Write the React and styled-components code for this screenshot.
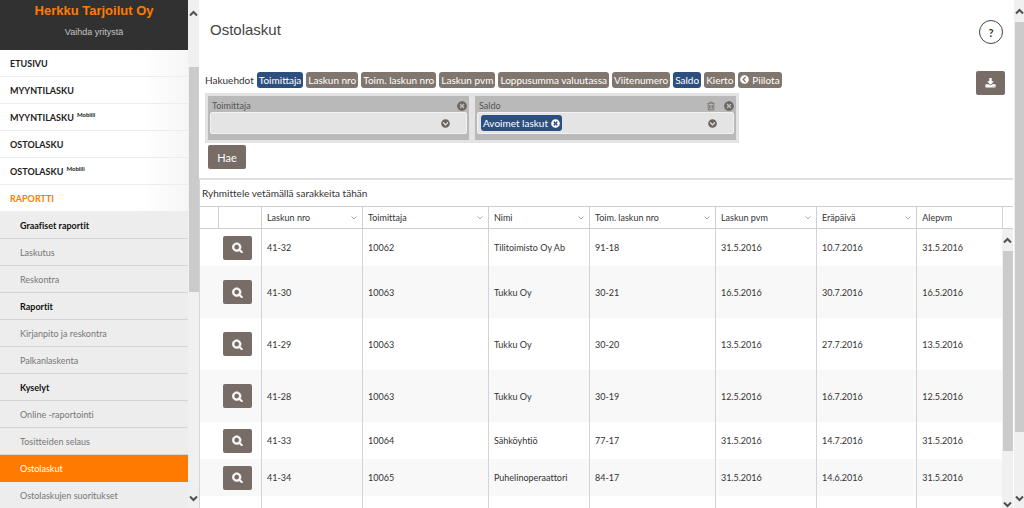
import React, { useState } from 'react';
import styled, { createGlobalStyle } from 'styled-components';
import {
  FaChevronCircleDown,
  FaChevronCircleLeft,
  FaTimesCircle,
} from 'react-icons/fa';

const GlobalStyle = createGlobalStyle`
  * {
    box-sizing: border-box;
  }

  body {
    margin: 0;
    background: #fff;
    color: #333;
    font-family: Lato, 'Open Sans', sans-serif;
    font-size: 9px;
    font-variant-ligatures: none;
    overflow: hidden;
  }

  button,
  input {
    font-family: inherit;
  }
`;

const Page = styled.div`
  display: flex;
  height: 100vh;
`;

/* scrollbars */

const Track = styled.div`
  flex: none;
  display: flex;
  flex-direction: column;
  align-items: center;
  width: ${(props) => props.$width || 11}px;
  background: #f0f0f0;
  color: #505050;
`;

const TrackEnd = styled.div`
  flex: none;
  display: flex;
  align-items: ${(props) => props.$align || 'center'};
  height: ${(props) => props.$height}px;
`;

const Thumb = styled.div`
  flex: ${(props) => props.$grow} 1 0;
  align-self: stretch;
  margin-left: 1px;
  background: #cbcbcb;
`;

const TrackRest = styled.div`
  flex: ${(props) => props.$grow} 1 0;
`;

/* sidebar */

const Sidebar = styled.aside`
  flex: none;
  width: 188px;
  overflow: hidden;
  background: #ededed;
`;

const Company = styled.div`
  display: flex;
  flex-direction: column;
  align-items: center;
  height: 50px;
  padding-top: 3px;
  background: #313131;
  font-family: 'Liberation Sans', Arial, sans-serif;
`;

const CompanyName = styled.strong`
  color: #ff7b00;
  font-size: 13px;
  line-height: 16px;
`;

const CompanySwitch = styled.a`
  margin-top: 5px;
  color: #c4c4c4;
  font-size: 9px;
  line-height: 16px;
  text-decoration: none;
`;

const MenuList = styled.ul`
  margin: 0;
  padding: 0;
  list-style: none;
`;

const MenuLink = styled.a`
  display: flex;
  align-items: center;
  height: 27px;
  padding-left: 10px;
  border-bottom: 1px solid #ededed;
  background: linear-gradient(to right, #fff 75%, #f6f6f6);
  color: ${(props) => (props.$open ? '#ff7b00' : '#222')};
  font-size: 9px;
  font-weight: 700;
  text-decoration: none;
`;

const Sup = styled.sup`
  align-self: flex-start;
  margin: 7px 0 0 3px;
  font-size: 6px;
  line-height: 8px;
`;

const SubLink = styled.a`
  display: flex;
  align-items: center;
  height: 27px;
  padding-left: 20px;
  border-bottom: 1px solid ${(props) => (props.$active ? '#ff7b00' : '#d4d4d4')};
  background: ${(props) => (props.$active ? '#ff7b00' : '#ededed')};
  color: ${(props) => (props.$active ? '#fff' : '#777')};
  font-size: 9px;
  text-decoration: none;
`;

const SubTitle = styled(SubLink).attrs({ as: 'div' })`
  color: #111;
  font-weight: 700;
`;

/* main area */

const Main = styled.main`
  flex: 1;
  min-width: 0;
  display: flex;
  flex-direction: column;
`;

const TitleBar = styled.header`
  display: flex;
  justify-content: space-between;
  align-items: flex-start;
  height: 62px;
  padding: 20px 11px 0;
`;

const Title = styled.h1`
  margin: 0;
  color: #444;
  font-family: 'Liberation Sans', Arial, sans-serif;
  font-size: 15px;
  font-weight: 400;
  line-height: 20px;
`;

const HelpButton = styled.button`
  width: 24px;
  height: 24px;
  padding: 0;
  border: 1px solid #444;
  border-radius: 50%;
  background: #fff;
  color: #333;
  font-size: 11px;
  font-weight: 700;
`;

const Filters = styled.section`
  display: flex;
  justify-content: space-between;
  align-items: flex-start;
  height: 116px;
  padding: 9px 9px 0 6px;
`;

const ChipRow = styled.div`
  display: flex;
  align-items: center;
  gap: 3px;
  height: 17px;
`;

const ChipLabel = styled.span`
  font-size: 10px;
`;

const Chip = styled.button`
  display: flex;
  align-items: center;
  gap: 3px;
  height: 16px;
  padding: 0 2px;
  border: 0;
  border-radius: 3px;
  background: ${(props) => (props.$on ? '#2d4f80' : '#80766e')};
  color: #fff;
  font-size: 10px;
  white-space: nowrap;
`;

const FilterPanel = styled.div`
  display: flex;
  gap: 6px;
  width: 534px;
  margin-top: 5px;
  padding: 3px;
  background: #e3e3e3;
`;

const FilterBox = styled.div`
  flex: 1;
  padding: 3px 2px 6px;
  background: #b9b9b9;
`;

const FilterHead = styled.div`
  display: flex;
  align-items: center;
  gap: 8px;
  height: 13px;
  padding-left: 2px;
  color: #555;

  label {
    flex: 1;
  }
`;

const IconButton = styled.button`
  display: flex;
  padding: 0;
  border: 0;
  background: none;
  color: #6b655f;
  font-size: 9px;
`;

const Combo = styled.div`
  display: flex;
  align-items: center;
  height: 22px;
  padding: 0 16px 0 3px;
  border: 1px solid #f2f2f2;
  border-radius: 2px;
  background: #e4e4e4;
`;

const ComboInput = styled.input`
  flex: 1;
  min-width: 0;
  height: 18px;
  border: 0;
  outline: 0;
  background: transparent;
  font-size: 10px;
`;

const SolidButton = styled.button`
  display: flex;
  align-items: center;
  justify-content: center;
  width: ${(props) => props.$width || 29}px;
  height: 24px;
  padding: 0;
  border: 0;
  border-radius: 2px;
  background: #776d66;
  color: #fff;
  font-size: 11px;
`;

const SearchRow = styled.div`
  padding: 2px 3px;
`;

/* grid */

const Grid = styled.section`
  flex: 1;
  min-height: 0;
  display: flex;
  flex-direction: column;
  margin-right: 1px;
  border-top: 2px solid #e0e0e0;
  border-left: 1px solid #d4d4d4;
`;

const GroupHint = styled.div`
  flex: none;
  height: 26px;
  padding-left: 2px;
  font-size: 10px;
  line-height: 26px;
`;

const HeadWrap = styled.div`
  flex: none;
  display: flex;
  border-top: 1px solid #cfcfcf;
  border-bottom: 1px solid #cfcfcf;
`;

const HeadEnd = styled.div`
  flex: none;
  width: 11px;
  border-left: 1px solid #d4d4d4;
`;

const BodyWrap = styled.div`
  flex: 1;
  min-height: 0;
  display: flex;
  overflow: hidden;
`;

const Scroller = styled.div`
  flex: 1;
  min-width: 0;
  overflow: hidden;
`;

const Table = styled.table`
  width: 100%;
  border-collapse: separate;
  border-spacing: 0;
  table-layout: fixed;
`;

const HeadCell = styled.th`
  height: 21px;
  padding: 0 5px;
  border-left: ${(props) => (props.$first ? '0' : '1px solid #cfcfcf')};
  font-weight: 400;
  text-align: left;
`;

const HeadInner = styled.span`
  display: flex;
  justify-content: space-between;
  align-items: center;
`;

const Row = styled.tr`
  height: ${(props) => props.$height}px;

  &:nth-child(even) {
    background: #f8f8f8;
  }
`;

const Cell = styled.td`
  padding: 0 5px;
  border-left: ${(props) => (props.$plain ? '0' : '1px solid #d4d4d4')};
`;

const PATHS = {
  search:
    'M1216 832q0-185-131.5-316.5t-316.5-131.5-316.5 131.5-131.5 316.5 131.5 316.5 316.5 131.5 316.5-131.5 131.5-316.5zm512 832q0 52-38 90t-90 38q-54 0-90-38l-343-342q-179 124-399 124-143 0-273.5-55.5t-225-150-150-225-55.5-273.5 55.5-273.5 150-225 225-150 273.5-55.5 273.5 55.5 225 150 150 225 55.5 273.5q0 220-124 399l343 343q37 37 37 90z',
  download:
    'M1344 1344q0-26-19-45t-45-19-45 19-19 45 19 45 45 19 45-19 19-45zm256 0q0-26-19-45t-45-19-45 19-19 45 19 45 45 19 45-19 19-45zm128-224v320q0 40-28 68t-68 28h-1472q-40 0-68-28t-28-68v-320q0-40 28-68t68-28h465l135 136q58 56 136 56t136-56l136-136h464q40 0 68 28t28 68zm-325-569q17 41-14 70l-448 448q-18 19-45 19t-45-19l-448-448q-31-29-14-70 17-39 59-39h256v-448q0-26 19-45t45-19h256q26 0 45 19t19 45v448h256q42 0 59 39z',
  trash:
    'M704 736v576q0 14-9 23t-23 9h-64q-14 0-23-9t-9-23v-576q0-14 9-23t23-9h64q14 0 23 9t9 23zm256 0v576q0 14-9 23t-23 9h-64q-14 0-23-9t-9-23v-576q0-14 9-23t23-9h64q14 0 23 9t9 23zm256 0v576q0 14-9 23t-23 9h-64q-14 0-23-9t-9-23v-576q0-14 9-23t23-9h64q14 0 23 9t9 23zm128 724v-948h-896v948q0 22 7 40.5t14.5 27 10.5 8.5h832q3 0 10.5-8.5t14.5-27 7-40.5zm-672-1076h448l-48-117q-7-9-17-11h-317q-10 2-17 11zm928 32v64q0 14-9 23t-23 9h-96v948q0 83-47 143.5t-113 60.5h-832q-66 0-113-58.5t-47-141.5v-952h-96q-14 0-23-9t-9-23v-64q0-14 9-23t23-9h309l70-167q15-37 54-63t79-26h320q40 0 79 26t54 63l70 167h309q14 0 23 9t9 23z',
};

function Icon({ name, size, weight = 0 }) {
  return (
    <svg
      width={size}
      height={size}
      viewBox="0 0 1792 1792"
      fill="currentColor"
      stroke="currentColor"
      strokeWidth={weight}
    >
      <path d={PATHS[name]} />
    </svg>
  );
}

function Arrow({ up }) {
  return (
    <svg width="9" height="7" viewBox="0 0 9 7" fill="none" stroke="currentColor" strokeWidth="2">
      <path d={up ? 'M1 5.5 4.5 2 8 5.5' : 'M1 1.5 4.5 5 8 1.5'} />
    </svg>
  );
}

function Caret() {
  return (
    <svg width="6" height="4" viewBox="0 0 6 4" fill="none" stroke="#aaa">
      <path d="M.5.5 3 3 5.5.5" />
    </svg>
  );
}

const menu = [
  { text: 'ETUSIVU' },
  { text: 'MYYNTILASKU' },
  { text: 'MYYNTILASKU', mobile: true },
  { text: 'OSTOLASKU' },
  { text: 'OSTOLASKU', mobile: true },
  { text: 'RAPORTTI', open: true },
];

const subMenu = [
  { text: 'Graafiset raportit', title: true },
  { text: 'Laskutus' },
  { text: 'Reskontra' },
  { text: 'Raportit', title: true },
  { text: 'Kirjanpito ja reskontra' },
  { text: 'Palkanlaskenta' },
  { text: 'Kyselyt', title: true },
  { text: 'Online -raportointi' },
  { text: 'Tositteiden selaus' },
  { text: 'Ostolaskut', active: true },
  { text: 'Ostolaskujen suoritukset' },
];

const chips = [
  'Toimittaja',
  'Laskun nro',
  'Toim. laskun nro',
  'Laskun pvm',
  'Loppusumma valuutassa',
  'Viitenumero',
  'Saldo',
  'Kierto',
];

const columns = [
  { text: 'Laskun nro', width: '12.6%' },
  { text: 'Toimittaja', width: '15.7%' },
  { text: 'Nimi', width: '12.6%' },
  { text: 'Toim. laskun nro', width: '15.7%' },
  { text: 'Laskun pvm', width: '12.6%' },
  { text: 'Eräpäivä', width: '12.5%' },
  { text: 'Alepvm' },
];

const rows = [
  { height: 37, cells: ['41-32', '10062', 'Tilitoimisto Oy Ab', '91-18', '31.5.2016', '10.7.2016', '31.5.2016'] },
  { height: 52, cells: ['41-30', '10063', 'Tukku Oy', '30-21', '16.5.2016', '30.7.2016', '16.5.2016'] },
  { height: 52, cells: ['41-29', '10063', 'Tukku Oy', '30-20', '13.5.2016', '27.7.2016', '13.5.2016'] },
  { height: 52, cells: ['41-28', '10063', 'Tukku Oy', '30-19', '12.5.2016', '16.7.2016', '12.5.2016'] },
  { height: 37, cells: ['41-33', '10064', 'Sähköyhtiö', '77-17', '31.5.2016', '14.7.2016', '31.5.2016'] },
  { height: 37, cells: ['41-34', '10065', 'Puhelinoperaattori', '84-17', '31.5.2016', '14.6.2016', '31.5.2016'] },
  { height: 37, cells: ['', '', '', '', '', '', ''] },
];

function Columns() {
  return (
    <colgroup>
      <col style={{ width: 18 }} />
      <col style={{ width: 43 }} />
      {columns.map((column) => (
        <col key={column.text} style={{ width: column.width }} />
      ))}
    </colgroup>
  );
}

function App() {
  const [selected, setSelected] = useState(['Toimittaja', 'Saldo']);

  const toggle = (chip) =>
    setSelected(
      selected.includes(chip)
        ? selected.filter((item) => item !== chip)
        : [...selected, chip]
    );

  return (
    <Page>
      <GlobalStyle />
      <Sidebar>
        <Company>
          <CompanyName>Herkku Tarjoilut Oy</CompanyName>
          <CompanySwitch href="#yritys">Vaihda yritystä</CompanySwitch>
        </Company>
        <MenuList>
          {menu.map((item, index) => (
            <li key={index}>
              <MenuLink href="#menu" $open={item.open}>
                {item.text}
                {item.mobile && <Sup>Mobiili</Sup>}
              </MenuLink>
            </li>
          ))}
          {subMenu.map((item) => (
            <li key={item.text}>
              {item.title ? (
                <SubTitle>{item.text}</SubTitle>
              ) : (
                <SubLink href="#raportti" $active={item.active}>
                  {item.text}
                </SubLink>
              )}
            </li>
          ))}
        </MenuList>
      </Sidebar>
      <Track>
        <TrackEnd $height={67} $align="flex-start">
          <TrackEnd $height={26}><Arrow up /></TrackEnd>
        </TrackEnd>
        <Thumb $grow={225} />
        <TrackRest $grow={196} />
        <TrackEnd $height={20}><Arrow /></TrackEnd>
      </Track>

      <Main>
        <TitleBar>
          <Title>Ostolaskut</Title>
          <HelpButton>?</HelpButton>
        </TitleBar>

        <Filters>
          <div>
            <ChipRow>
              <ChipLabel>Hakuehdot</ChipLabel>
              {chips.map((chip) => (
                <Chip
                  key={chip}
                  $on={selected.includes(chip)}
                  onClick={() => toggle(chip)}
                >
                  {chip}
                </Chip>
              ))}
              <Chip>
                <FaChevronCircleLeft size={9} />
                Piilota
              </Chip>
            </ChipRow>
            <FilterPanel>
              <FilterBox>
                <FilterHead>
                  <label htmlFor="toimittaja">Toimittaja</label>
                  <IconButton aria-label="Poista"><FaTimesCircle size={10} /></IconButton>
                </FilterHead>
                <Combo>
                  <ComboInput id="toimittaja" />
                  <IconButton aria-label="Avaa"><FaChevronCircleDown /></IconButton>
                </Combo>
              </FilterBox>
              <FilterBox>
                <FilterHead>
                  <label htmlFor="saldo">Saldo</label>
                  <IconButton aria-label="Tyhjennä"><Icon name="trash" size={10} /></IconButton>
                  <IconButton aria-label="Poista"><FaTimesCircle size={10} /></IconButton>
                </FilterHead>
                <Combo>
                  <Chip $on>
                    Avoimet laskut
                    <FaTimesCircle size={9} />
                  </Chip>
                  <ComboInput id="saldo" />
                  <IconButton aria-label="Avaa"><FaChevronCircleDown /></IconButton>
                </Combo>
              </FilterBox>
            </FilterPanel>
            <SearchRow>
              <SolidButton $width={38}>Hae</SolidButton>
            </SearchRow>
          </div>
          <SolidButton aria-label="Lataa">
            <Icon name="download" size={11} />
          </SolidButton>
        </Filters>

        <Grid>
          <GroupHint>Ryhmittele vetämällä sarakkeita tähän</GroupHint>
          <HeadWrap>
            <Scroller>
              <Table>
                <Columns />
                <thead>
                  <tr>
                    <HeadCell $first />
                    <HeadCell />
                    {columns.map((column) => (
                      <HeadCell key={column.text}>
                        <HeadInner>
                          {column.text}
                          {column.width && <Caret />}
                        </HeadInner>
                      </HeadCell>
                    ))}
                  </tr>
                </thead>
              </Table>
            </Scroller>
            <HeadEnd />
          </HeadWrap>
          <BodyWrap>
            <Scroller>
              <Table>
                <Columns />
                <tbody>
                  {rows.map((row, index) => (
                    <Row key={index} $height={row.height}>
                      <Cell $plain />
                      <Cell $plain>
                        {row.cells[0] && (
                          <SolidButton aria-label={`Avaa ${row.cells[0]}`}>
                            <Icon name="search" size={11} weight={110} />
                          </SolidButton>
                        )}
                      </Cell>
                      {row.cells.map((cell, i) => (
                        <Cell key={i}>{cell}</Cell>
                      ))}
                    </Row>
                  ))}
                </tbody>
              </Table>
            </Scroller>
            <Track>
              <TrackEnd $height={22}><Arrow up /></TrackEnd>
              <Thumb $grow={200} />
              <TrackRest $grow={49} />
              <TrackEnd $height={8}><Arrow /></TrackEnd>
            </Track>
          </BodyWrap>
        </Grid>
      </Main>

      <Track $width={10}>
        <TrackEnd $height={22}><Arrow up /></TrackEnd>
        <Thumb $grow={410} />
        <TrackRest $grow={56} />
        <TrackEnd $height={20}><Arrow /></TrackEnd>
      </Track>
    </Page>
  );
}

export default App;
